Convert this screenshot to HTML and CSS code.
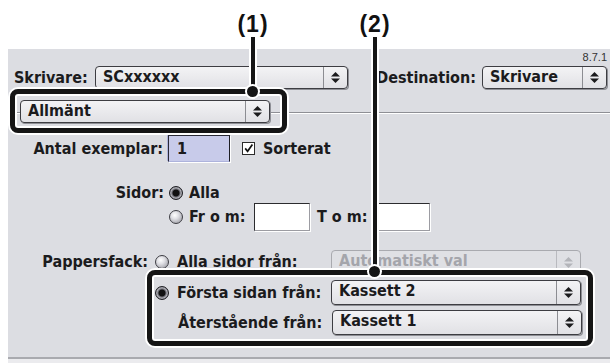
FILE: index.html
```html
<!DOCTYPE html>
<html lang="sv">
<head>
    <meta charset="UTF-8">
    <title>Skrivare</title>
    <link rel="stylesheet" href="styles.css">
</head>
<body>
    <div class="panel">
        <div class="version">8.7.1</div>

        <div class="row row-printer">
            <span class="lbl lbl-printer">Skrivare:</span>
            <div class="popup popup-printer">
                <span class="val">SCxxxxxx</span>
                <span class="step"><svg width="9" height="13" viewBox="0 0 9 13"><polygon points="0,5.5 4.5,1 9,5.5"/><polygon points="0,7.5 4.5,12 9,7.5"/></svg></span>
            </div>
            <span class="lbl lbl-dest">Destination:</span>
            <div class="popup popup-dest">
                <span class="val">Skrivare</span>
                <span class="step"><svg width="9" height="13" viewBox="0 0 9 13"><polygon points="0,5.5 4.5,1 9,5.5"/><polygon points="0,7.5 4.5,12 9,7.5"/></svg></span>
            </div>
        </div>

        <div class="row row-panel">
            <div class="popup popup-panel">
                <span class="val">Allmänt</span>
                <span class="step"><svg width="9" height="13" viewBox="0 0 9 13"><polygon points="0,5.5 4.5,1 9,5.5"/><polygon points="0,7.5 4.5,12 9,7.5"/></svg></span>
            </div>
        </div>

        <div class="row row-copies">
            <span class="lbl lbl-copies">Antal exemplar:</span>
            <span class="field field-copies">1</span>
            <span class="check"><svg width="11" height="11" viewBox="0 0 11 11"><path d="M2.2 5.4 L4.6 8.3 L9.4 1.6" fill="none" stroke="#111" stroke-width="1.7"/></svg></span>
            <span class="lbl">Sorterat</span>
        </div>

        <div class="row row-pages">
            <span class="lbl lbl-pages">Sidor:</span>
            <span class="radio on"></span>
            <span class="lbl opt">Alla</span>
        </div>

        <div class="row row-range">
            <span class="radio"></span>
            <span class="lbl opt lbl-from">Fr o m:</span>
            <span class="field"></span>
            <span class="lbl lbl-to">T o m:</span>
            <span class="field"></span>
        </div>

        <div class="row row-tray">
            <span class="lbl lbl-tray">Pappersfack:</span>
            <span class="radio"></span>
            <span class="lbl opt lbl-src">Alla sidor från:</span>
            <div class="popup popup-src off">
                <span class="val">Automatiskt val</span>
                <span class="step"><svg width="9" height="13" viewBox="0 0 9 13"><polygon points="0,5.5 4.5,1 9,5.5"/><polygon points="0,7.5 4.5,12 9,7.5"/></svg></span>
            </div>
        </div>

        <div class="row row-first">
            <span class="radio on"></span>
            <span class="lbl opt lbl-src">Första sidan från:</span>
            <div class="popup popup-src">
                <span class="val">Kassett 2</span>
                <span class="step"><svg width="9" height="13" viewBox="0 0 9 13"><polygon points="0,5.5 4.5,1 9,5.5"/><polygon points="0,7.5 4.5,12 9,7.5"/></svg></span>
            </div>
        </div>

        <div class="row row-rest">
            <span class="lbl lbl-src">Återstående från:</span>
            <div class="popup popup-src">
                <span class="val">Kassett 1</span>
                <span class="step"><svg width="9" height="13" viewBox="0 0 9 13"><polygon points="0,5.5 4.5,1 9,5.5"/><polygon points="0,7.5 4.5,12 9,7.5"/></svg></span>
            </div>
        </div>
    </div>
    <div class="foot"></div>

    <!-- callouts drawn over the dialog -->
    <span class="tag tag-1">(1)</span>
    <span class="tag tag-2">(2)</span>
    <div class="lead lead-1"></div>
    <div class="lead lead-2"></div>
    <div class="box box-1"></div>
    <div class="box box-2"></div>
    <div class="dot dot-1"></div>
    <div class="dot dot-2"></div>
</body>
</html>
```

FILE: styles.css
```css
body {
    position: relative;
    margin: 0;
    width: 610px;
    height: 363px;
    overflow: hidden;
    background: #ffffff;
    font-family: "DejaVu Sans Condensed", "DejaVu Sans", sans-serif;
    font-stretch: condensed;
    font-weight: bold;
    font-size: 16px;
    color: #1b1b1d;
}

.panel {
    box-sizing: border-box;
    margin: 49px 0 0 8px;
    height: 310px;
    padding-top: 2px;
    background: #dcdde2;
    border-bottom: 2px solid #a9aaaf;
}

.foot {
    margin-left: 8px;
    height: 4px;
    background: #ebebee;
}

.version {
    height: 13px;
    line-height: 13px;
    padding-right: 3px;
    text-align: right;
    font-family: "Liberation Sans", sans-serif;
    font-stretch: normal;
    font-weight: normal;
    font-size: 11px;
    color: #333;
}

.row {
    display: flex;
    align-items: center;
}

.lbl {
    white-space: nowrap;
    line-height: 16px;
}

/* rows */
.row-printer { margin-top: 2px; height: 23px; padding-left: 6px; }
.lbl-printer { width: 81px; }
.popup-printer { width: 253px; }
.lbl-dest { width: 128px; padding-right: 6px; text-align: right; }
.popup-dest { width: 125px; }

.row-panel {
    margin-top: 11px;
    height: 23px;
    padding-left: 12px;
    background: linear-gradient(to bottom, transparent 12px, #8e8f95 12px, #8e8f95 13px, #ffffff 13px, #ffffff 14px, transparent 14px);
}
.popup-panel { width: 250px; }

.row-copies { margin-top: 12px; height: 27px; }
.lbl-copies { width: 155px; text-align: right; }
.check {
    display: flex;
    margin: 0 9px 0 13px;
    width: 11px;
    height: 11px;
    background: #fff;
    outline: 1px solid #2b2b2b;
}

.row-pages { margin-top: 23px; height: 16px; }
.lbl-pages { width: 156px; text-align: right; margin-right: 5px; }
.opt { margin-left: 6px; }

.row-range { margin-top: 2px; height: 28px; padding-left: 161px; }
.lbl-from { width: 65px; }
.lbl-to { width: 57px; margin-left: 7px; }

.row-tray { margin-top: 19px; height: 24px; }
.lbl-tray { width: 140px; text-align: right; margin-right: 7px; }
.lbl-src { width: 154px; margin-left: 9px; }
.opt.lbl-src { margin-left: 8px; }

.row-first { margin-top: 6px; height: 25px; padding-left: 147px; }
.row-rest { margin-top: 5px; height: 25px; padding-left: 161px; }

/* controls */
.popup {
    box-sizing: border-box;
    display: flex;
    height: 100%;
    border: 1px solid #3d3d42;
    border-radius: 4px;
    background: linear-gradient(#f3f3f5, #e1e1e5);
    box-shadow: 1px 1px 0 #8e8f95;
}
.popup-src { width: 250px; }

.popup .val {
    flex: 1;
    padding-left: 7px;
    line-height: 20px;
    white-space: nowrap;
    overflow: hidden;
}

.popup .step {
    display: flex;
    align-items: center;
    justify-content: center;
    width: 23px;
    border-left: 1px solid #8c8d92;
}

.popup .step svg { fill: #1b1b1d; }

.popup.off {
    border-color: #a9aaaf;
    background: #dfe0e4;
    box-shadow: none;
    color: #a4a5ab;
}
.popup.off .step { border-left-color: #b9babf; }
.popup.off .step svg { fill: #b3b4b9; }

.field {
    box-sizing: border-box;
    display: block;
    width: 56px;
    height: 28px;
    background: #ffffff;
    border: 1px solid;
    border-color: #2b2b2e #9c9ca2 #9c9ca2 #2b2b2e;
    box-shadow: 1px 1px 0 #ffffff;
}

.field.field-copies {
    margin-left: 5px;
    width: 62px;
    height: 27px;
    padding-left: 8px;
    line-height: 25px;
    background: #c8cbea;
    border-color: #2a2a36 #1e1e24 #aeb3dc #2a2a36;
    box-shadow: 1px 1px 0 #ffffff, -1px -1px 0 #aeb3dc;
}

.radio {
    box-sizing: border-box;
    flex: none;
    width: 14px;
    height: 14px;
    border: 1px solid #3e3e44;
    border-radius: 50%;
    background: radial-gradient(circle at 40% 35%, #ffffff 0, #e0e0e5 35%, #8e8e96 100%);
}

.radio.on {
    border-color: #1e1e22;
    background: radial-gradient(circle, #111 0, #111 3px, #5f5f66 3.8px, #b4b4bb 5.2px, #6a6a71 6.5px);
}

/* annotations */
.tag {
    position: absolute;
    top: 11px;
    width: 44px;
    text-align: center;
    font-family: "Liberation Sans", sans-serif;
    font-stretch: normal;
    font-size: 23px;
    letter-spacing: 1px;
    color: #111;
}
.tag-1 { left: 231px; }
.tag-2 { left: 353px; }

.lead {
    position: absolute;
    width: 4px;
    background: #151515;
    box-shadow: 0 0 0 2px #ffffff;
}
.lead-1 { left: 251px; top: 37px; height: 56px; }
.lead-2 { left: 373px; top: 37px; height: 235px; }

.box {
    position: absolute;
    box-sizing: border-box;
    border: 5px solid #151515;
    border-radius: 8px;
    box-shadow: 0 0 0 2px #ffffff, inset 0 0 0 2px #ffffff;
}
.box-1 { left: 10px; top: 89px; width: 277px; height: 44px; }
.box-2 { left: 147px; top: 270px; width: 446px; height: 76px; }

.dot {
    position: absolute;
    width: 11px;
    height: 11px;
    border-radius: 50%;
    background: #151515;
    box-shadow: 0 0 0 2px #ffffff;
}
.dot-1 { left: 247px; top: 86px; }
.dot-2 { left: 369px; top: 266px; }
```
